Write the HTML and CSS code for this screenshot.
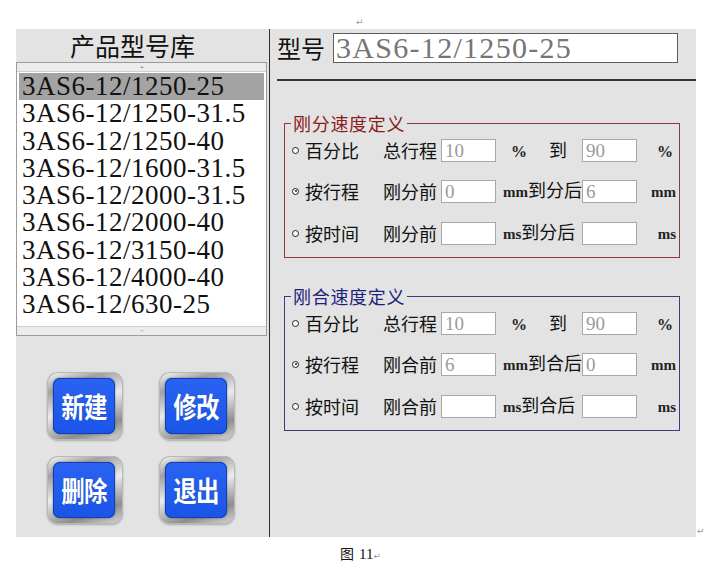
FILE: index.html
```html
<!DOCTYPE html>
<html lang="zh-CN">
<head>
<meta charset="utf-8">
<title>产品型号库</title>
<link rel="stylesheet" href="styles.css">
</head>
<body>
<div class="page">
  <div class="topmark"><span class="pmark">↵</span></div>
  <div class="winrow">
    <div class="window">
      <div class="left">
        <div class="lib-title">产品型号库</div>
        <div class="listbox">
          <div class="scroll scroll-top"><span class="arrow up"></span></div>
          <ul class="items">
            <li class="sel">3AS6-12/1250-25</li>
            <li>3AS6-12/1250-31.5</li>
            <li>3AS6-12/1250-40</li>
            <li>3AS6-12/1600-31.5</li>
            <li>3AS6-12/2000-31.5</li>
            <li>3AS6-12/2000-40</li>
            <li>3AS6-12/3150-40</li>
            <li>3AS6-12/4000-40</li>
            <li>3AS6-12/630-25</li>
          </ul>
          <div class="scroll scroll-bottom"><span class="arrow down"></span></div>
        </div>
        <div class="buttons">
          <div class="btn"><div class="btn-face"><span>新建</span></div></div>
          <div class="btn"><div class="btn-face"><span>修改</span></div></div>
          <div class="btn"><div class="btn-face"><span>删除</span></div></div>
          <div class="btn"><div class="btn-face"><span>退出</span></div></div>
        </div>
      </div>
      <div class="right">
        <div class="model-row">
          <span class="model-label">型号</span>
          <div class="model-input">3AS6-12/1250-25</div>
        </div>
        <div class="rule"></div>

        <fieldset class="group open">
          <legend>刚分速度定义</legend>
          <div class="row">
            <div class="opt"><span class="radio"></span><span>百分比</span></div>
            <div class="lbl">总行程</div>
            <div class="field">10</div>
            <div class="mid pct"><span class="unit u-pct">%</span><span class="to">到</span></div>
            <div class="field">90</div>
            <div class="end"><span class="unit u-pct">%</span></div>
          </div>
          <div class="row r2">
            <div class="opt"><span class="radio on"></span><span>按行程</span></div>
            <div class="lbl">刚分前</div>
            <div class="field">0</div>
            <div class="mid"><span class="unit">mm</span><span>到分后</span></div>
            <div class="field">6</div>
            <div class="end"><span class="unit">mm</span></div>
          </div>
          <div class="row r3">
            <div class="opt"><span class="radio"></span><span>按时间</span></div>
            <div class="lbl">刚分前</div>
            <div class="field"></div>
            <div class="mid"><span class="unit">ms</span><span>到分后</span></div>
            <div class="field"></div>
            <div class="end"><span class="unit">ms</span></div>
          </div>
        </fieldset>

        <fieldset class="group close">
          <legend>刚合速度定义</legend>
          <div class="row">
            <div class="opt"><span class="radio"></span><span>百分比</span></div>
            <div class="lbl">总行程</div>
            <div class="field">10</div>
            <div class="mid pct"><span class="unit u-pct">%</span><span class="to">到</span></div>
            <div class="field">90</div>
            <div class="end"><span class="unit u-pct">%</span></div>
          </div>
          <div class="row r2">
            <div class="opt"><span class="radio on"></span><span>按行程</span></div>
            <div class="lbl">刚合前</div>
            <div class="field">6</div>
            <div class="mid"><span class="unit">mm</span><span>到合后</span></div>
            <div class="field">0</div>
            <div class="end"><span class="unit">mm</span></div>
          </div>
          <div class="row r3">
            <div class="opt"><span class="radio"></span><span>按时间</span></div>
            <div class="lbl">刚合前</div>
            <div class="field"></div>
            <div class="mid"><span class="unit">ms</span><span>到合后</span></div>
            <div class="field"></div>
            <div class="end"><span class="unit">ms</span></div>
          </div>
        </fieldset>
      </div>
    </div>
    <span class="pmark endmark">↵</span>
  </div>
  <div class="caption"><span class="cap-cn">图</span><span class="cap-num">11</span><span class="pmark">↵</span></div>
</div>
</body>
</html>
```

FILE: styles.css
```css
html, body {
  margin: 0;
  padding: 0;
  background: #ffffff;
}

.page {
  width: 718px;
  padding-left: 16px;
  box-sizing: border-box;
  font-family: "Noto Sans CJK SC", "Liberation Serif", serif;
  color: #111;
}

.pmark {
  font-family: "DejaVu Sans", sans-serif;
  font-size: 9px;
  line-height: 10px;
  color: #9a9a9a;
}

.topmark {
  height: 29px;
  padding-left: 340px;
  box-sizing: border-box;
  padding-top: 6px;
}

.winrow {
  display: flex;
  align-items: flex-end;
}

.endmark {
  margin-left: 1px;
  margin-bottom: 1px;
}

.window {
  width: 680px;
  height: 508px;
  background: #e3e3e3;
  display: flex;
}

/* ---------- left panel ---------- */
.left {
  width: 253px;
  border-right: 1px solid #2c2c2c;
  display: flex;
  flex-direction: column;
}

.lib-title {
  height: 33px;
  display: flex;
  align-items: center;
  justify-content: center;
  font-size: 25px;
  line-height: 33px;
  padding-right: 20px;
  color: #111;
}

.listbox {
  width: 251px;
  height: 274px;
  box-sizing: border-box;
  border: 1px solid #9c9c9c;
  background: #ffffff;
  display: flex;
  flex-direction: column;
}

.scroll {
  height: 8px;
  background: #ececec;
  display: flex;
  align-items: center;
  justify-content: center;
  flex: none;
}

.scroll-top { border-bottom: 1px solid #cfcfcf; }
.scroll-bottom { border-top: 1px solid #cfcfcf; }

.arrow {
  width: 0;
  height: 0;
  border-left: 2px solid transparent;
  border-right: 2px solid transparent;
}
.arrow.up { border-bottom: 2px solid #9a9a9a; }
.arrow.down { border-top: 2px solid #c4c4c4; }

.items {
  flex: 1;
  list-style: none;
  margin: 0;
  padding: 1px 2px 0 2px;
}

.items li {
  height: 27.25px;
  line-height: 27.25px;
  padding-left: 3px;
  font-family: "Liberation Serif", serif;
  font-size: 27px;
  letter-spacing: 0.5px;
  color: #111;
  white-space: nowrap;
}

.items li.sel {
  background: #a3a3a3;
}

.buttons {
  display: grid;
  grid-template-columns: 76px 76px;
  grid-auto-rows: 68px;
  column-gap: 36px;
  row-gap: 16px;
  padding: 36px 0 0 31px;
}

.btn {
  box-sizing: border-box;
  padding: 6px 8px 6px 6px;
  border-radius: 11px;
  background: linear-gradient(160deg, #fbfbfb 0%, #a2a2a2 22%, #ececec 48%, #8e8e8e 78%, #dcdcdc 100%);
  box-shadow: inset 0 0 0 1px #b8b8b8, 0 1px 2px rgba(0, 0, 0, 0.25);
}

.btn-face {
  height: 100%;
  border-radius: 7px;
  background: linear-gradient(#2a63f2, #1a55e8);
  box-shadow: inset 0 0 0 1px #1040b8, 0 0 2px rgba(0, 0, 0, 0.45);
  display: flex;
  align-items: center;
  justify-content: center;
  color: #ffffff;
}

.btn-face span {
  display: inline-block;
  font-family: "Noto Sans CJK SC", sans-serif;
  font-weight: 700;
  font-size: 28px;
  line-height: 30px;
  transform: scaleX(0.84);
  letter-spacing: -1px;
  text-shadow: 0 0 1px rgba(0, 0, 0, 0.3);
}

/* ---------- right panel ---------- */
.right {
  flex: 1;
  padding: 4px 0 0 7px;
}

.model-row {
  display: flex;
  align-items: center;
  height: 30px;
}

.model-label {
  font-size: 24px;
  width: 56px;
  line-height: 30px;
  color: #111;
}

.model-input {
  width: 345px;
  height: 30px;
  box-sizing: border-box;
  border: 1px solid #5c5c5c;
  background: #ffffff;
  color: #757575;
  font-family: "Liberation Serif", serif;
  font-size: 30px;
  line-height: 28px;
  letter-spacing: 1.3px;
  padding-left: 2px;
  white-space: nowrap;
}

.rule {
  margin-top: 16px;
  border-top: 2px solid #333333;
}

.group {
  width: 396px;
  box-sizing: border-box;
  margin: 32px 0 0 7px;
  padding: 0 3px 14px 6px;
  border: 1px solid #8e3a3a;
  min-width: 0;
}

.group.close {
  margin-top: 28px;
  border-color: #3b3b7e;
}

.group legend {
  padding: 0 2px;
  font-size: 18px;
  line-height: 20px;
  letter-spacing: 0.7px;
  color: #8a1b1b;
}

.group.close legend {
  color: #1e1e7c;
}

.row {
  display: grid;
  grid-template-columns: 92px 58px 55px 86px 55px 39px;
  height: 23px;
  line-height: 23px;
  align-items: center;
  margin-top: 5px;
  font-size: 18px;
  color: #111;
}

.row.r2 { margin-top: 17px; }
.row.r3 { margin-top: 19px; }

.opt {
  display: flex;
  align-items: center;
  white-space: nowrap;
}

.radio {
  width: 7px;
  height: 7px;
  box-sizing: border-box;
  border: 1px solid #222;
  border-radius: 50%;
  margin: 0 6px 0 1px;
  position: relative;
  background: #fff;
}

.radio.on::after {
  content: "";
  position: absolute;
  left: 1.5px;
  top: 1.5px;
  width: 2px;
  height: 2px;
  border-radius: 50%;
  background: #222;
}

.lbl {
  white-space: nowrap;
}

.field {
  height: 23px;
  box-sizing: border-box;
  border: 1px solid #a8a8a8;
  background: #ffffff;
  font-family: "Liberation Serif", serif;
  font-size: 19px;
  line-height: 21px;
  color: #9a9a9a;
  padding-left: 3px;
}

.mid {
  display: flex;
  align-items: baseline;
  padding-left: 7px;
  white-space: nowrap;
}

.mid.pct {
  padding-left: 15px;
}

.mid .to {
  margin-left: 22px;
}

.unit {
  font-family: "Liberation Serif", serif;
  font-weight: 700;
  font-size: 15px;
  color: #222;
}

.u-pct {
  font-size: 16px;
}

.end {
  text-align: right;
  white-space: nowrap;
}

.end .u-pct {
  padding-right: 3px;
}

/* ---------- caption ---------- */
.caption {
  margin-top: 8px;
  padding-left: 324px;
  line-height: 16px;
  font-size: 13px;
}

.cap-cn {
  font-family: "Noto Sans CJK SC", sans-serif;
  font-size: 14px;
  margin-right: 5px;
}

.cap-num {
  font-family: "Liberation Serif", serif;
  font-size: 15px;
}
```
